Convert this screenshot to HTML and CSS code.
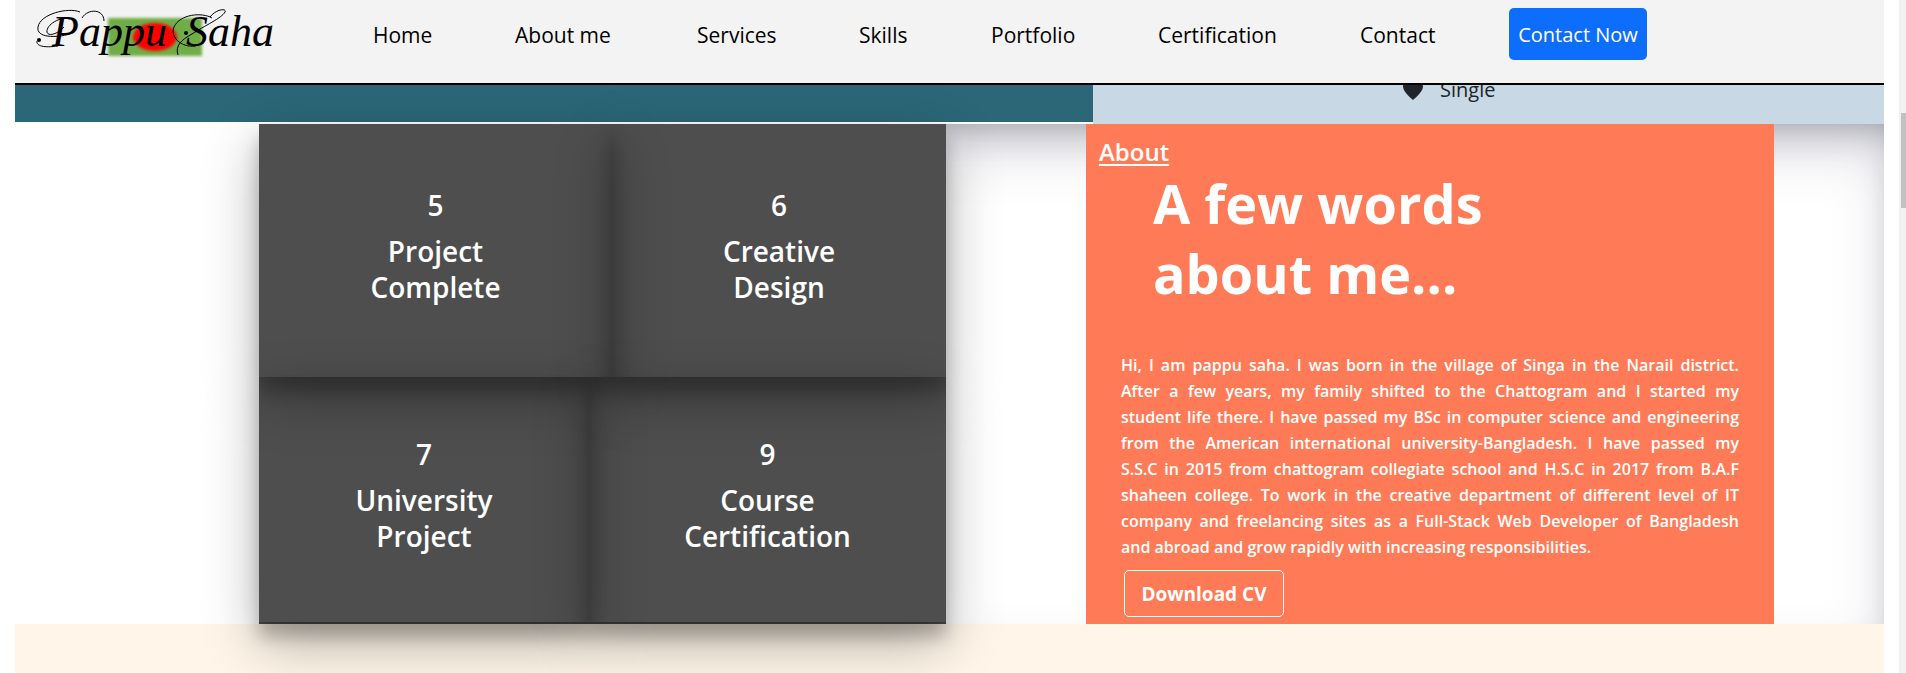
FILE: index.html
```html
<!DOCTYPE html>
<html lang="en">
<head>
<meta charset="utf-8">
<title>Pappu Saha</title>
<link rel="stylesheet" href="styles.css">
</head>
<body>
<div class="page">
  <header class="header">
    <a class="logo" href="#" aria-label="Pappu Saha">
      <svg width="262" height="66" viewBox="0 0 262 66">
        <defs>
          <filter id="soft" x="-10%" y="-20%" width="120%" height="140%"><feGaussianBlur stdDeviation="1.500"/></filter>
        </defs>
        <rect x="88" y="18" width="94" height="38" fill="#70ad47" filter="url(#soft)"/>
        <ellipse cx="135" cy="37" rx="22" ry="14" fill="#ff0000" filter="url(#soft)"/>
        <g fill="none" stroke="#000" stroke-width="1">
          <path d="M38 46C24 48 16 46 17 41M50 34C36 38 16 38 18 27C20 14 48 7 60 12"/>
          <path d="M50 19C40 16 26 25 27 32C28 37 38 34 44 27"/>
          <path d="M62 18C68 8 84 9 84 21"/>
          <path d="M190 17C196 9 207 8 205 12C202 18 184 26 172 34C161 40 155 46 158 55"/>
          <path d="M176 46C160 48 150 36 154 27C160 14 182 12 192 18"/>
        </g>
        <circle cx="19" cy="40" r="2"/>
        <circle cx="166" cy="33" r="2"/>
        <text class="logo-text" y="46"><tspan x="32">Pappu</tspan> <tspan x="166">Saha</tspan></text>
      </svg>
    </a>
    <nav class="nav">
      <a href="#">Home</a>
      <a href="#">About me</a>
      <a href="#">Services</a>
      <a href="#">Skills</a>
      <a href="#">Portfolio</a>
      <a href="#">Certification</a>
      <a href="#">Contact</a>
    </nav>
    <button class="contact-btn" type="button">Contact Now</button>
  </header>

  <section class="hero">
    <div class="hero-photo"></div>
    <div class="hero-info">
      <p class="detail">
        <svg width="20" height="20" viewBox="0 0 16 16" fill="#212529"><path d="M8 2C10-1.500 16-.500 16 4.700C16 9 11.500 12.800 8 16C4.500 12.800 0 9 0 4.700C0-.500 6-1.500 8 2Z"/></svg>
        <span>Single</span>
      </p>
    </div>
  </section>

  <main class="about">
    <div class="stats-col">
      <div class="stats">
        <div class="stats-row stats-row-top">
          <div class="stat"><h3>5</h3><h3>Project<br>Complete</h3></div>
          <div class="stat"><h3>6</h3><h3>Creative<br>Design</h3></div>
        </div>
        <div class="stats-row stats-row-bottom">
          <div class="stat"><h3>7</h3><h3>University<br>Project</h3></div>
          <div class="stat"><h3>9</h3><h3>Course<br>Certification</h3></div>
        </div>
      </div>
    </div>
    <article class="bio">
      <h4 class="bio-label">About</h4>
      <h1 class="bio-title">A few words<br>about me...</h1>
      <p class="bio-text">
        <span>Hi, I am pappu saha. I was born in the village of Singa in the Narail district.</span>
        <span>After a few years, my family shifted to the Chattogram and I started my</span>
        <span>student life there. I have passed my BSc in computer science and engineering</span>
        <span>from the American international university-Bangladesh. I have passed my</span>
        <span>S.S.C in 2015 from chattogram collegiate school and H.S.C in 2017 from B.A.F</span>
        <span>shaheen college. To work in the creative department of different level of IT</span>
        <span>company and freelancing sites as a Full-Stack Web Developer of Bangladesh</span>
        <span>and abroad and grow rapidly with increasing responsibilities.</span>
      </p>
      <button class="cv-btn" type="button">Download CV</button>
    </article>
  </main>

  <section class="next"></section>
</div>
<div class="track"><div class="thumb"></div></div>
</body>
</html>
```
FILE: styles.css
```css
* { box-sizing: border-box; }

body {
  margin: 0;
  display: flex;
  min-height: 100vh;
  background: #fff;
  color: #212529;
  font-family: "Open Sans", "Noto Sans", sans-serif;
}

h1, h3, h4, p { margin: 0; }

.page {
  flex: 1;
  min-width: 0;
  display: flex;
  flex-direction: column;
  padding: 0 15px;
}

.header {
  position: sticky;
  top: 0;
  z-index: 10;
  display: flex;
  align-items: flex-start;
  height: 85px;
  padding-left: 5px;
  background: #f3f3f3;
  border-bottom: 2px solid #000;
}

.logo { display: block; }
.logo svg { display: block; }

.logo-text {
  font-family: "Liberation Serif", serif;
  font-style: italic;
  font-size: 44px;
}

.nav {
  display: grid;
  grid-template-columns: 142px 182px 162px 132px 167px 202px 149px;
  margin-left: 91px;
  padding-top: 20px;
}

.nav a {
  color: #000;
  font-size: 21px;
  line-height: 30px;
  text-decoration: none;
}

.contact-btn {
  width: 138px;
  height: 52px;
  margin-top: 8px;
  padding: 0;
  border: 0;
  border-radius: 5px;
  background: #0d6efd;
  color: #fff;
  font: 20px "Open Sans", sans-serif;
}

.hero {
  display: grid;
  grid-template-columns: 1078fr 791fr;
  height: 39px;
}

.hero-photo {
  margin-bottom: 2px;
  background: #2b6777;
}

.hero-info {
  padding-left: 310px;
  background: #c8d8e4;
}

.detail {
  display: flex;
  align-items: center;
  gap: 17px;
  margin-top: -9px;
  font-size: 20px;
  line-height: 28px;
}

.about {
  display: grid;
  grid-template-columns: 931fr 938fr;
  min-height: 500px;
  box-shadow: rgba(50, 50, 93, 0.25) 0 30px 60px -12px inset,
              rgba(0, 0, 0, 0.3) 0 18px 36px -18px inset;
}

.stats-col {
  display: flex;
  padding-left: 244px;
  background: #fff;
}

.stats {
  position: relative;
  z-index: 1;
  flex: 1;
  display: grid;
  grid-template-rows: 253fr 245fr;
  padding-bottom: 2px;
  background: #4e4e4e;
}

.stats-row { display: grid; }
.stats-row-top { grid-template-columns: 353fr 334fr; }
.stats-row-bottom { grid-template-columns: 330fr 357fr; }

.stat {
  display: flex;
  flex-direction: column;
  justify-content: center;
  gap: 10px;
  padding-bottom: 10px;
  color: #fff;
  text-align: center;
  box-shadow: rgba(0, 0, 0, 0.3) 0 20px 52px,
              rgba(0, 0, 0, 0.22) 0 15px 16px;
}

.stat h3 {
  font-size: 28px;
  font-weight: 600;
  line-height: 36px;
}

.bio {
  margin: 0 110px 0 140px;
  padding: 12px 35px 7px;
  background: #ff7b57;
  color: #fff;
}

.bio-label {
  margin-left: -22px;
  font-size: 24px;
  font-weight: 600;
  line-height: 32px;
  text-decoration: underline;
  text-decoration-thickness: 2px;
  text-underline-offset: 3px;
}

.bio-title {
  margin-left: 32px;
  font-size: 54px;
  font-weight: 700;
  line-height: 70px;
}

.bio-text {
  margin-top: 44px;
  font-size: 16px;
  font-weight: 600;
  line-height: 26px;
  text-align: justify;
}

.bio-text span {
  display: block;
  text-align-last: justify;
}

.bio-text span:last-child { text-align-last: left; }

.cv-btn {
  width: 160px;
  height: 47px;
  margin: 10px 0 0 3px;
  padding: 0;
  border: 1px solid #fff;
  border-radius: 5px;
  background: transparent;
  color: #fff;
  font: 700 19px "Open Sans", sans-serif;
}

.next {
  flex: 1;
  background: #fff6e9;
}

.track {
  width: 7px;
  padding: 113px 0 0 2px;
  background: #f1f1f1;
}

.thumb {
  height: 95px;
  background: #c1c1c1;
}
```
